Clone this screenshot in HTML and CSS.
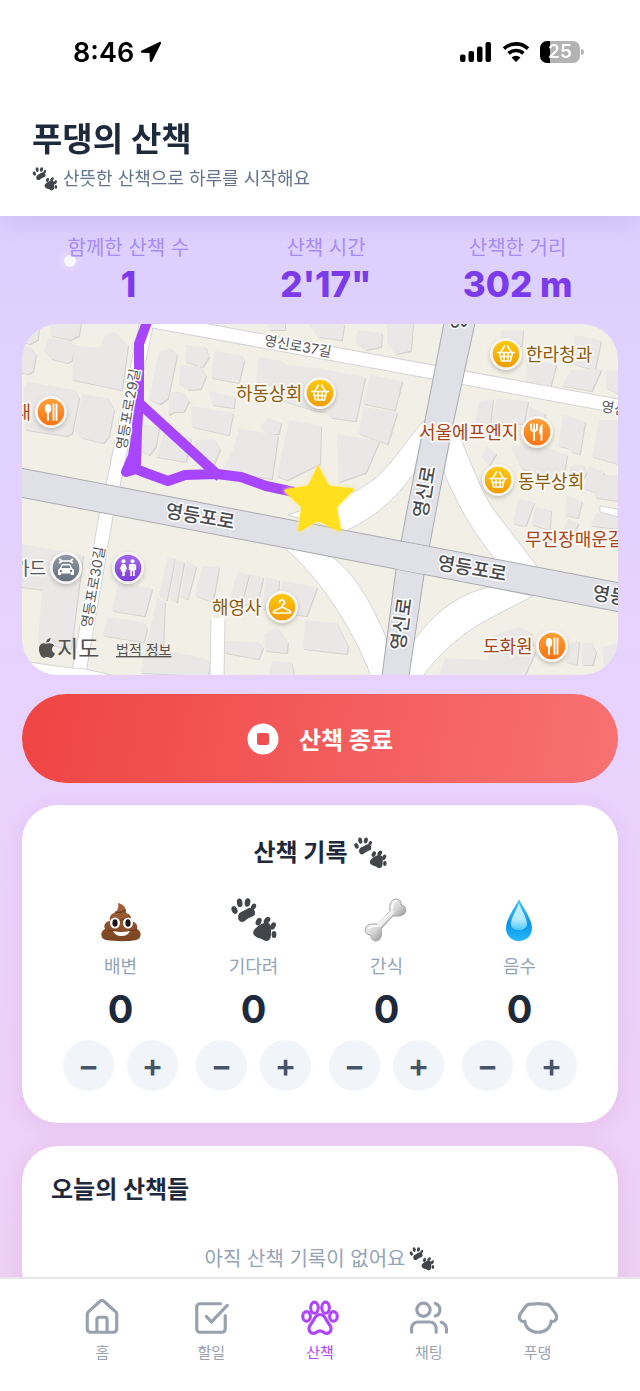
FILE: index.html
```html
<!DOCTYPE html>
<html lang="ko">
<head>
  <meta charset="UTF-8">
  <meta name="viewport" content="width=device-width, initial-scale=1">
  <title>푸댕의 산책</title>
  <link rel="stylesheet" href="styles.css">
</head>
<body>

  <!-- shared icons -->
  <svg class="defs" width="0" height="0" aria-hidden="true">
    <defs>
      <symbol id="paws" viewBox="0 0 46 44">
        <g fill="#42464b">
          <path d="M10 14c3-1 5-3 8-4 4-1 6 2 6 5 0 4-3 3-6 5-3 1-4 4-7 4-4 0-6-7-1-10z"/>
          <ellipse cx="3.5" cy="12" rx="2.8" ry="4" transform="rotate(-25 3.5 12)"/>
          <ellipse cx="8.7" cy="4.8" rx="2.8" ry="4.3" transform="rotate(-8 8.7 4.8)"/>
          <ellipse cx="16.5" cy="4.5" rx="2.8" ry="4.2" transform="rotate(10 16.5 4.5)"/>
          <ellipse cx="22.6" cy="8.5" rx="2.3" ry="3.2" transform="rotate(30 22.6 8.5)"/>
          <path d="M25 30c3-3 8-6 12-5 3 1 3 4 3 8 0 3 0 6-1 8-2 3-6 2-8 0-2-1-5-1-7-3-3-2-2-6 1-8z"/>
          <ellipse cx="27.6" cy="23.6" rx="2.7" ry="4" transform="rotate(25 27.6 23.6)"/>
          <ellipse cx="36" cy="22.4" rx="2.7" ry="4" transform="rotate(38 36 22.4)"/>
          <ellipse cx="42" cy="28" rx="2.6" ry="3.9" transform="rotate(25 42 28)"/>
          <ellipse cx="43" cy="36.5" rx="2.4" ry="3.6"/>
        </g>
      </symbol>
      <linearGradient id="gold" x1="0" y1="0" x2="0" y2="1">
        <stop offset="0" stop-color="#ffc90e"/><stop offset="1" stop-color="#f09c00"/>
      </linearGradient>
      <linearGradient id="orange" x1="0" y1="0" x2="0" y2="1">
        <stop offset="0" stop-color="#ff9f38"/><stop offset="1" stop-color="#fb7413"/>
      </linearGradient>
      <linearGradient id="violet" x1="0" y1="0" x2="0" y2="1">
        <stop offset="0" stop-color="#a368f0"/><stop offset="1" stop-color="#7b3fd8"/>
      </linearGradient>
      <linearGradient id="slate" x1="0" y1="0" x2="0" y2="1">
        <stop offset="0" stop-color="#8f99a5"/><stop offset="1" stop-color="#66707c"/>
      </linearGradient>
      <symbol id="basket" viewBox="-16 -16 32 32">
        <circle r="16" fill="#f7f6f3"/><circle r="13.3" fill="url(#gold)"/>
        <path d="M-8.5-1.5h17M-6.5-1l2 8h9l2-8M-5.5 2.5h11M-2-1v8M2-1v8M-5.5-1.5l4-6.5M5.500-1.500l-4-6.5" fill="none" stroke="#fff" stroke-width="1.5" stroke-linejoin="round" stroke-linecap="round"/>
      </symbol>
      <symbol id="spoon" viewBox="-16 -16 32 32">
        <circle r="16" fill="#f7f6f3"/><circle r="13.3" fill="url(#orange)"/>
        <ellipse cx="-3" cy="-3.5" rx="3.2" ry="4.5" fill="#fff"/>
        <path d="M-3 0v8M2.5-7.5V8M5.5-7.5V8" stroke="#fff" stroke-width="1.9" stroke-linecap="round"/>
      </symbol>
      <symbol id="fork" viewBox="-16 -16 32 32">
        <circle r="16" fill="#f7f6f3"/><circle r="13.3" fill="url(#orange)"/>
        <path d="M-6-7.5v4q0 2.500 3 2.5t3-2.500v-4M-3-7.500V8M4.500 2v6" fill="none" stroke="#fff" stroke-width="1.9" stroke-linecap="round"/>
        <path d="M5.500-8c-3 1-3.500 6-3.500 10h3.500z" fill="#fff"/>
      </symbol>
    </defs>
  </svg>

  <div class="app">
    <header class="header">
      <div class="status">
        <div class="status-left">
          <span>8:46</span>
          <svg width="22" height="22" viewBox="0 0 22 22"><path d="M19.500 1 1.700 9.400c-1.400.7-1 2.200.3 2.300l7.500.3.300 7.800c.1 1.500 1.800 1.700 2.400.3L21 2.500c.4-1-.5-2-1.500-1.500z"/></svg>
        </div>
        <div class="status-right">
          <svg width="32" height="20" viewBox="0 0 32 20">
            <rect x="0" y="12.5" width="5.5" height="7.500" rx="2"/><rect x="8.500" y="9" width="5.500" height="11" rx="2"/>
            <rect x="17" y="4.500" width="5.500" height="15.500" rx="2"/><rect x="25.500" y="0" width="5.500" height="20" rx="2"/>
          </svg>
          <svg width="28" height="20" viewBox="0 0 28 20">
            <path d="M2 6.600a17.500 17.500 0 0 1 24 0M6.600 11.400a11 11 0 0 1 14.800 0" fill="none" stroke="#000" stroke-width="3.600"/>
            <path d="M9.500 15.400a7 7 0 0 1 9 0L14 20z"/>
          </svg>
          <div class="battery">25</div>
        </div>
      </div>
      <div class="heading">
        <h1>푸댕의 산책</h1>
        <p><svg class="paws-s"><use href="#paws"/></svg>산뜻한 산책으로 하루를 시작해요</p>
      </div>
    </header>

    <main class="content">
      <span class="sparkle"></span>

      <section class="stats">
        <div class="stat"><span>함께한 산책 수</span><strong>1</strong></div>
        <div class="stat"><span>산책 시간</span><strong>2'17"</strong></div>
        <div class="stat"><span>산책한 거리</span><strong>302 m</strong></div>
      </section>

      <svg class="map" viewBox="22 324 596 351" role="img" aria-label="산책 경로 지도">
        <rect x="22" y="324" width="596" height="351" fill="#f2efe6"/>

        <!-- buildings -->
        <g class="building">
          <path d="M22 326h16l-1 13-7 4-8-2zM22 349l8-1 5 7-3 16-4 2-6-1zM51 324h29l-2 11-8 4-18-4zM49 339l20 3 5 5-3 13-4 2-15-4-7-8zM75 346l25 3 6-13 8-3 13 13-6 43-48-10z"/>
          <path d="M25 388l3-5 46 8 4 7-7 35-5 2-40-6zM83 395l24 4 6 11-5 26-5 6-21-5-6-7zM160 353l10-4 6 6-9 43-7 5-10-4zM187 346l18 2 3 9-6 9-16-5zM181 366l18 1 6 9-5 12-12 1-2-3-6-3zM215 352l25 4 3 5-5 21-26-5zM260 358l21 4 6 8-4 16-26-5zM171 393l10 0 7 8-5 10-9 0-5 3zM210 392l10 3 14 3-1 9-20-3zM192 407l40 7-4 20-35-8zM142 425l16 3-3 18-6 8-8-4zM165 434l25 5-5 22-28-5zM195 441l18-1 6 9-7 17-12-5zM240 430l37 6-6 42-48-8 10-18zM268 419l12 4-2 10-10 0-6-7zM290 421l30 6-1 36-32 16-9-3z"/>
          <path d="M287 366l30 3 47 9-9 42-23-3-6-6-10-1-33-10zM371 376l30 6-7 27-30-6zM364 408l32 5-9 30-27-10zM338 435l40 7-13 30-26 9zM268 324h16v5l-14 0zM310 325l33 0-2 14-22-3zM359 331l22 3-1 12-14 3-10-8zM388 324h24l-2 26-14 3-8-11z"/>
          <path d="M502 331l20 0-1 14-20 0zM527 360l28 5-6 24-21-7zM571 371l29-1-9 20-28-5zM575 336l25 5-6 28-21-6zM607 371h11v22l-11-6zM480 402l12-2-4 34-12-9zM497 400l30 2-4 21-30-2zM530 408l14 6-5 28-12-4zM564 416l20 6-5 31-7-2-2-3-11-3zM600 421h18v42l-25-7zM512 447l34 1 20 8-4 24-40-12zM487 448l8 6-6 10-6-7zM571 467l11-1 4 6-4 7-12-3zM590 467l13 6-2 20-16-5z"/>
          <path d="M519 500l14 3-8 22-11-2zM536 508l14 3-1 18-16-5zM568 497l13 5-4 15-11-3zM597 514l21 2v12l-26-3zM569 520l8 4-4 8-8-3zM598 476h20v24l-22-3z"/>
          <path d="M22 545l60 11-12 92-31-6 4-53-21-3zM168 559l6 0-8 40-6-5zM176 561l7 2-7 38-5-3zM187 562l8 5-8 31-5-2zM203 567l15 1-6 33-16-6zM119 584l32 5-7 26-31-5zM108 618l34 5 4 6-3 12-39-6zM158 600l6 3-2 48 42 8 6 6-3 10-65-3 6-30z"/>
          <path d="M238 573l10 2-8 31-10-4zM252 575l10 3-6 28-11-2zM267 578l11 3-2 30-13-3zM283 582l33 6-10 27-28-4zM226 642l32 1 4 5-4 10-33-6zM265 635l12-6 10 14-1 9-20-2zM306 621l30 3 11 22-1 7-42-5zM273 662l18 2 2 11-23 0z"/>
          <path d="M440 675l6-16 42 2 8-19 18 3 20 7-10 23zM493 637l25-9 12 5 2 12-36 2zM572 644l6-2-2 22-9-3zM583 644l7-1 5 9-3 12-9 0zM603 648l15-4v22l-13 4z"/>
        </g>

        <!-- side streets -->
        <g fill="none" stroke="#d5d5d6" stroke-width="15">
          <path d="M147 321 112 490M107 510 78 678M148 320 618 406M218 620l-1 56"/>
        </g>
        <g fill="none" stroke="#fff" stroke-width="13">
          <path d="M147 321 112 490M107 510 78 678M148 320 618 406M218 618l-1 58"/>
        </g>
        <g fill="#fff" stroke="#d5d5d6">
          <path d="M21 661l51 7 14 1 29 7H21z"/>
          <path d="M425 420C402 443 388 477 353 492L288 515l57 16c38-17 55-39 69-58z"/>
          <path d="M453 423c13 24 27 68 41 87l46 60-43-9c-24-27-44-65-53-89z"/>
          <path d="M283 547c31 24 67 75 88 129h15v-39c-16-37-32-64-54-80z"/>
          <path d="M490 587c-30 6-56 25-77 55l-5 34h15c12-17 35-41 64-56l46-24z"/>
          <path d="M600 506l18 3v8l-18-5z"/>
        </g>

        <!-- main roads -->
        <g stroke="#a9abb0">
          <path d="M444 323h31l-22 101-13 66-16 85-15 101h-27l14-107 11-59 18-90z" fill="#dfe1e6"/>
          <path d="M20 468 620 583v29L20 497z" fill="#dfe1e6"/>
        </g>
        <path d="M402 542l27 5-5 27-28-5z" fill="#dfe1e6"/>

        <!-- route -->
        <g fill="none" stroke="#a845ff" stroke-width="10" stroke-linejoin="round">
          <path d="M147 322 139 344v56l-2 30-4 26-7 16 10-3 10 4 22 8 17-6 32-1 24 3 25 9 28 6"/>
          <path d="M139 403l81 74M138 395l-2 70"/>
        </g>

        <!-- road names -->
        <g class="street" text-anchor="middle">
          <text transform="translate(297 351) rotate(10)">영신로37길</text>
          <text transform="translate(133 410) rotate(-80)">영등포로29길</text>
          <text transform="translate(98 588) rotate(-80)">영등포로30길</text>
          <text transform="translate(634 417) rotate(10)">영신로37길</text>
        </g>
        <g class="street road" text-anchor="middle">
          <text transform="translate(199 523) rotate(10)">영등포로</text>
          <text transform="translate(471 575) rotate(10)">영등포로</text>
          <text transform="translate(626 605) rotate(10)">영등포로</text>
          <text transform="translate(431 493) rotate(-80)">영신로</text>
          <text transform="translate(408 625) rotate(-82)">영신로</text>
          <text transform="translate(469 305) rotate(-80)">영신로</text>
        </g>

        <!-- places -->
        <g class="place">
          <text x="236" y="400">하동상회</text>
          <text x="526" y="361">한라청과</text>
          <text x="518" y="488">동부상회</text>
          <text x="212" y="614">해영사</text>
          <g class="food">
            <text x="419" y="439">서울에프엔지</text>
            <text x="525" y="546">무진장매운갈비</text>
            <text x="483" y="653">도화원</text>
            <text x="31" y="419" text-anchor="end">순대</text>
          </g>
          <text class="auto" x="46" y="575" text-anchor="end">카드</text>
        </g>
        <g class="pins">
          <use href="#basket" x="304" y="377" width="32" height="32"/>
          <use href="#basket" x="490" y="338" width="32" height="32"/>
          <use href="#basket" x="482" y="464" width="32" height="32"/>
          <use href="#spoon" x="35" y="396" width="32" height="32"/>
          <use href="#spoon" x="536" y="630" width="32" height="32"/>
          <use href="#fork" x="521" y="416" width="32" height="32"/>
          <g transform="translate(282 607)">
            <circle r="16" fill="#f7f6f3"/><circle r="13.3" fill="url(#gold)"/>
            <path d="M-2.5-4.5a2.5 2.5 0 1 1 3.5 2.3q-1 .5-1 2.2L-8 4q-1.5 2 .5 2h15q2 0 .5-2L0 0" fill="none" stroke="#fff" stroke-width="1.7" stroke-linecap="round" stroke-linejoin="round"/>
          </g>
          <g transform="translate(66 568)">
            <circle r="16" fill="#f7f6f3"/><circle r="13.3" fill="url(#slate)"/>
            <path d="M-8 7V2l2-2 2-4h8l2 4 2 2v5H5V5.500H-5V7z" fill="#fff"/>
            <path d="M-3.500-2.500h7l1 2.500h-9z" fill="#737d89"/>
            <circle cx="-5" cy="3" r="1.200" fill="#737d89"/><circle cx="5" cy="3" r="1.200" fill="#737d89"/>
            <path d="M-4-7h8M-7-9l3 2-3 2M7-9 4-7l3 2" fill="none" stroke="#fff" stroke-width="1.700"/>
          </g>
          <g transform="translate(128 568)">
            <circle r="16" fill="#f7f6f3"/><circle r="13.3" fill="url(#violet)"/>
            <g fill="#fff">
              <circle cx="-4.500" cy="-6.700" r="2"/><circle cx="4.500" cy="-6.700" r="2"/>
              <path d="M-6-4h3l2.300 5-1.200.5-.7-1.500.8 3.500h-1.500V8h-2.400V3.500h-1.500L-6.400 0l-.7 1.500-1.200-.5zM2.500-4h4q1.700 0 1.700 1.700V2H6.700v6H5V3H4v5H2.300V2H.8v-4.300Q.8-4 2.500-4z"/>
            </g>
          </g>
        </g>

        <path class="star" d="M318 465l10 19q1 2 3 2l21 2q3 1 1 3l-15 15q-1 1-1 3l4 20q0 3-3 2l-18-9q-2-1-4 0l-15 9q-3 1-3-2l3-20q0-2-1-3l-15-14q-2-2 1-3l20-3q2 0 3-2z"/>

        <g fill="#55534f">
          <path d="M50.500 638c.2 2.600-1.900 4.700-4.200 4.700-.3-2.400 2-4.600 4.200-4.700zM39 649c0-5 4-7 7.500-5.200 2.500-1.200 6-.8 7.700 1.700-3.400 2-2.700 6.700.8 8-1.500 4-3.500 5.200-6 4-1.500-.6-2.500-.6-4 0C41.500 659 39 653 39 649z"/>
          <text class="brand" x="57" y="657">지도</text>
          <a href="#"><text class="legal" x="116" y="655">법적 정보</text></a>
        </g>
      </svg>

      <button class="stop">
        <svg width="32" height="32" viewBox="0 0 32 32"><circle cx="16" cy="16" r="15.500" fill="#fff"/><rect x="10" y="10" width="12" height="12" rx="2" fill="#f0504f"/></svg>
        산책 종료
      </button>

      <section class="card">
        <h2 class="record-title">산책 기록 <svg class="paws-m"><use href="#paws"/></svg></h2>
        <div class="records">
          <div class="record">
            <svg width="46" height="46" viewBox="0 0 46 46">
              <defs><linearGradient id="poo" x1="0" y1="0" x2="0" y2="1"><stop offset="0" stop-color="#a5653d"/><stop offset="1" stop-color="#7c4322"/></linearGradient></defs>
              <path d="M20 6c5 1 9 5 8 10 4 1 6 4 5 8 5 1 7 4 6 8 5 2 5 10-1 11-9 2-22 1-30 0-6-1-6-9-1-11-2-4 1-8 5-8-1-4 1-7 4-8 3-2 5-4 4-10z" fill="url(#poo)"/>
              <path d="M13 24c6 1 14-1 18-5M9 33c4 1 6 1 8 0M31 34c3 0 6-1 8-2M17 15c4 1 8 0 10-2" fill="none" stroke="#6d3a1e" stroke-width="1.200"/>
              <ellipse cx="17" cy="26" rx="5" ry="5.500" fill="#fff"/><ellipse cx="30" cy="26" rx="5" ry="5.500" fill="#fff"/>
              <ellipse cx="17" cy="26" rx="2.600" ry="3.800" fill="#191512"/><ellipse cx="30" cy="26" rx="2.600" ry="3.800" fill="#191512"/>
              <path d="M15 34q8 2 17 0-2 5-8.500 5T15 34z" fill="#fff"/>
            </svg>
            <span class="record-name">배변</span><strong>0</strong>
            <div class="counter"><button aria-label="배변 빼기">−</button><button aria-label="배변 더하기">+</button></div>
          </div>
          <div class="record">
            <svg width="46" height="46"><use href="#paws"/></svg>
            <span class="record-name">기다려</span><strong>0</strong>
            <div class="counter"><button aria-label="기다려 빼기">−</button><button aria-label="기다려 더하기">+</button></div>
          </div>
          <div class="record">
            <svg width="46" height="46" viewBox="0 0 46 46">
              <defs><linearGradient id="bone" x1=".3" y1=".3" x2=".7" y2=".7"><stop offset="0" stop-color="#f1f1f1"/><stop offset=".5" stop-color="#d6d6d7"/><stop offset="1" stop-color="#98989b"/></linearGradient></defs>
              <path d="M26 14c-1-5 0-11 6-12 4 0 6 3 5 6 4 0 6 4 4 8-3 4-8 3-12 3L17 32c1 5 1 11-5 12-4 0-5-3-5-6-5 0-7-4-5-8 3-4 8-3 12-3z" fill="url(#bone)" stroke="#949497" stroke-width=".8"/>
              <path d="M15 28l13-13" stroke="#efefef" stroke-width="4" stroke-linecap="round"/>
              <path d="M28 12c0-4 1-7 4-8M5 31c3-3 6-2 9-2" fill="none" stroke="#fafafa" stroke-width="2" stroke-linecap="round"/>
            </svg>
            <span class="record-name">간식</span><strong>0</strong>
            <div class="counter"><button aria-label="간식 빼기">−</button><button aria-label="간식 더하기">+</button></div>
          </div>
          <div class="record">
            <svg width="46" height="46" viewBox="0 0 46 46">
              <defs><linearGradient id="drop" x1="0" y1="0" x2="0" y2="1"><stop offset="0" stop-color="#48c3f5"/><stop offset=".6" stop-color="#0996e8"/><stop offset="1" stop-color="#27b8fb"/></linearGradient>
              <linearGradient id="shine" x1="0" y1="0" x2="0" y2="1"><stop offset="0" stop-color="#c9f3ff"/><stop offset=".6" stop-color="#b5ebff"/><stop offset="1" stop-color="#4fc8fa"/></linearGradient></defs>
              <path d="M22 2c1 4 13 19 13 29 0 8-6 13-13 13S9 39 9 31C9 21 21 6 22 2z" fill="url(#drop)"/>
              <path d="M22 6c2 6 8 15 8 21 0 4-4 6-8 6s-8-2-8-6c0-6 6-15 8-21z" fill="url(#shine)"/>
            </svg>
            <span class="record-name">음수</span><strong>0</strong>
            <div class="counter"><button aria-label="음수 빼기">−</button><button aria-label="음수 더하기">+</button></div>
          </div>
        </div>
      </section>

      <section class="card today">
        <h2>오늘의 산책들</h2>
        <p>아직 산책 기록이 없어요 <svg class="paws-s"><use href="#paws"/></svg></p>
      </section>
    </main>

    <nav class="tabs">
      <a href="#">
        <svg viewBox="0 0 24 24"><path d="M2.700 9.500a2 2 0 0 1 .6-1.400l7.300-6.500a2 2 0 0 1 2.800 0l7.300 6.500a2 2 0 0 1 .6 1.400V19a2 2 0 0 1-2 2H4.700a2 2 0 0 1-2-2zM8.800 21v-8a1.500 1.500 0 0 1 1.500-1.500h3.400a1.500 1.500 0 0 1 1.500 1.500v8"/></svg>
        홈
      </a>
      <a href="#">
        <svg viewBox="0 0 24 24"><path d="M18 3H5a2 2 0 0 0-2 2v14a2 2 0 0 0 2 2h14a2 2 0 0 0 2-2v-8.500M9 11l3.300 3.500L22.300 4"/></svg>
        할일
      </a>
      <a href="#" class="active">
        <svg viewBox="0 0 24 24"><ellipse cx="8.500" cy="5.500" rx="2.400" ry="3.500"/><ellipse cx="15.500" cy="5.500" rx="2.400" ry="3.500"/><ellipse cx="3.500" cy="11" rx="2.400" ry="3"/><ellipse cx="20.500" cy="11" rx="2.400" ry="3"/><path d="M12 9.800c2 0 3 1.200 4 3.500 1 1.900 3 3.200 3 5.500 0 2.200-2 3.400-4 2.700-2-1.800-4-1.800-6 0-2 .7-4-.5-4-2.700 0-2.300 2-3.600 3-5.500 1-2.300 2-3.500 4-3.500z"/></svg>
        산책
      </a>
      <a href="#">
        <svg viewBox="0 0 24 24"><circle cx="8.500" cy="6.800" r="4.200"/><path d="M16.500 21v-2.500a4 4 0 0 0-4-4H5a4 4 0 0 0-4 4V21M23 21v-2a4.500 4.500 0 0 0-3.300-4.300M16 2.800a4.200 4.200 0 0 1 0 8"/></svg>
        채팅
      </a>
      <a href="#">
        <svg viewBox="0 0 24 24"><path d="M8 3.300c2.700-.5 5.300-.5 8 0 2-.5 3.300.5 4.300 2.200 1.300 2 3.500 3.500 3.500 6 0 2-1.800 3.200-3.500 2.500C20 18.300 16.500 21 12 21s-8-2.700-8.300-7C2 14.700.2 13.500.2 11.500c0-2.500 2.200-4 3.500-6C4.700 3.800 6 2.800 8 3.300z"/></svg>
        푸댕
      </a>
    </nav>
  </div>

</body>
</html>
```
FILE: styles.css
```css
* {
  box-sizing: border-box;
}

body {
  margin: 0;
  font-family: Inter, "Noto Sans CJK KR", sans-serif;
  color: #1e293b;
}

h1, h2, p {
  margin: 0;
}

button {
  font-family: inherit;
  border: none;
  cursor: pointer;
}

.defs {
  position: absolute;
}

.app {
  height: 100vh;
  display: flex;
  flex-direction: column;
  background: linear-gradient(180deg, #ddd0fe 16%, #e8d3fd 54%, #f0d0f2 100%);
}

/* header */
.header {
  position: relative;
  z-index: 1;
  flex: none;
  background: #fff;
  box-shadow: 0 4px 24px rgba(88, 28, 135, 0.12);
}

.status {
  height: 104px;
  padding: 0 60px 0 73px;
  display: flex;
  justify-content: space-between;
  align-items: center;
  color: #000;
}

.status-left {
  display: flex;
  align-items: center;
  gap: 6px;
  font-size: 27px;
  font-weight: 600;
}

.status-right {
  display: flex;
  align-items: center;
  gap: 10px;
}

.battery {
  position: relative;
  width: 40px;
  height: 22px;
  border-radius: 7px;
  background: linear-gradient(90deg, #000 25%, #b3b3b3 25%);
  color: #fff;
  font-size: 19px;
  font-weight: 600;
  line-height: 22px;
  text-align: center;
}

.battery::after {
  content: "";
  position: absolute;
  right: -4px;
  top: 8px;
  width: 3px;
  height: 6px;
  border-radius: 0 3px 3px 0;
  background: #b3b3b3;
}

.heading {
  padding: 13px 32px 23px;
}

.heading h1 {
  font-size: 33px;
  line-height: 44px;
  font-weight: 700;
}

.heading p {
  display: flex;
  align-items: center;
  gap: 5px;
  margin-top: 4px;
  font-size: 18px;
  line-height: 28px;
  color: #64748b;
}

.paws-s {
  width: 26px;
  height: 24px;
}

.paws-m {
  width: 33px;
  height: 32px;
}

/* content */
.content {
  position: relative;
  flex: 1;
  min-height: 0;
  overflow-y: auto;
  scrollbar-width: none;
  padding: 18px 22px 24px;
  display: flex;
  flex-direction: column;
}

.content > * {
  flex: none;
}

.sparkle {
  position: absolute;
  left: 64px;
  top: 39px;
  width: 12px;
  height: 12px;
  border-radius: 50%;
  background: rgba(255, 255, 255, 0.85);
  box-shadow: 0 0 10px rgba(255, 255, 255, 0.5);
}

.stats {
  display: flex;
  justify-content: space-around;
  margin-bottom: 18px;
}

.stat {
  position: relative;
  display: flex;
  flex-direction: column;
  align-items: center;
}

.stat span {
  font-size: 20px;
  line-height: 28px;
  color: #a78bfa;
}

.stat strong {
  font-size: 35px;
  line-height: 44px;
  font-weight: 800;
  color: #7c3aed;
}

/* map */
.map {
  display: block;
  width: 100%;
  border-radius: 36px;
  margin-bottom: 19px;
}

.building {
  fill: #e9e8e6;
  stroke: #e9e8e6;
  stroke-width: 2;
  stroke-linejoin: round;
  filter: drop-shadow(1px 1px 0 #d2d1cf);
}

.street {
  font-size: 14px;
  fill: #55565a;
  stroke: #fff;
  stroke-width: 3px;
  stroke-linejoin: round;
  paint-order: stroke;
}

.road {
  font-size: 19px;
  font-weight: 500;
  fill: #4b4c50;
}

.place {
  font-size: 18px;
  fill: #8c5c0c;
  stroke: #f8f7f3;
  stroke-width: 4px;
  stroke-linejoin: round;
  paint-order: stroke;
}

.food {
  fill: #a6441a;
}

.auto {
  fill: #4f5662;
}

.pins {
  filter: drop-shadow(0 2px 2px rgba(0, 0, 0, 0.2));
}

.star {
  fill: #ffdf1e;
  filter: drop-shadow(0 0 2px #ffe98a);
}

.brand {
  font-size: 23px;
}

.legal {
  font-size: 14px;
  text-decoration: underline;
}

/* stop button */
.stop {
  display: flex;
  align-items: center;
  justify-content: center;
  gap: 20px;
  height: 89px;
  margin-bottom: 22px;
  border-radius: 45px;
  background: linear-gradient(100deg, #ef4444, #f87171);
  color: #fff;
  font-size: 24px;
  font-weight: 700;
}

/* cards */
.card {
  background: #fff;
  border-radius: 36px;
  padding: 30px 32px 32px;
  margin-bottom: 23px;
  box-shadow: 0 4px 24px rgba(192, 38, 160, 0.1);
}

.card h2 {
  font-size: 24px;
  line-height: 36px;
  font-weight: 700;
}

.card .record-title {
  display: flex;
  justify-content: center;
  align-items: center;
  gap: 6px;
  margin-bottom: 26px;
}

.records {
  display: grid;
  grid-template-columns: repeat(4, 1fr);
}

.record {
  display: flex;
  flex-direction: column;
  align-items: center;
}

.record-name {
  margin: 10px 0 6px;
  font-size: 18px;
  line-height: 28px;
  color: #94a3b8;
}

.record strong {
  font-size: 38px;
  line-height: 44px;
  font-weight: 700;
}

.counter {
  display: flex;
  gap: 13px;
  margin-top: 9px;
}

.counter button {
  width: 51px;
  height: 51px;
  padding: 0;
  border-radius: 50%;
  background: #f1f5f9;
  color: #475569;
  font-size: 32px;
  font-weight: 600;
}

.card.today {
  padding: 26px 29px 32px;
}

.today p {
  display: flex;
  justify-content: center;
  align-items: center;
  gap: 4px;
  margin-top: 37px;
  font-size: 20px;
  line-height: 28px;
  color: #94a3b8;
}

/* bottom tabs */
.tabs {
  position: relative;
  flex: none;
  display: grid;
  grid-template-columns: repeat(5, 1fr);
  padding: 20px 48px 28px;
  background: #fff;
  border-top: 2px solid #e5e7eb;
}

.tabs a {
  display: flex;
  flex-direction: column;
  align-items: center;
  gap: 6px;
  font-size: 15px;
  line-height: 20px;
  color: #99a1af;
  text-decoration: none;
}

.tabs svg {
  width: 38px;
  height: 38px;
  overflow: visible;
  fill: none;
  stroke: currentColor;
  stroke-width: 2;
  stroke-linecap: round;
  stroke-linejoin: round;
}

.tabs .active {
  color: #ad46ff;
}
```
